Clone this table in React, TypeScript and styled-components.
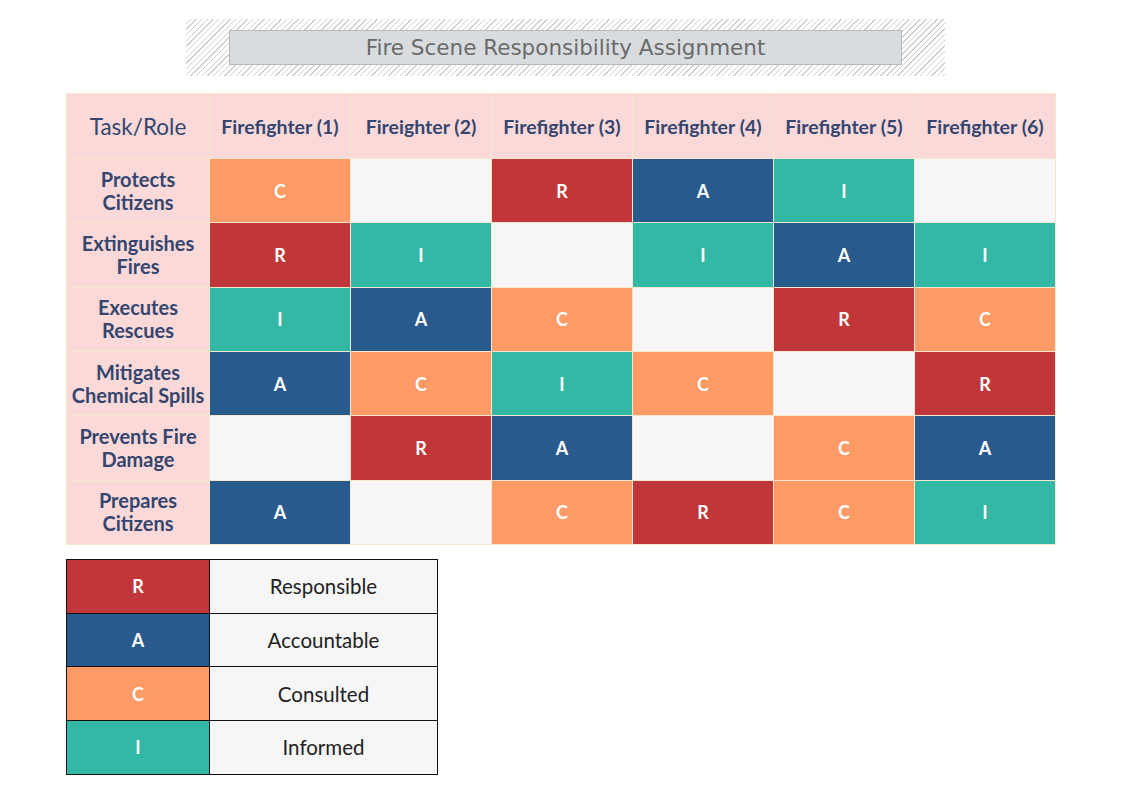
import React from 'react';
import styled, { createGlobalStyle } from 'styled-components';

type Code = 'R' | 'A' | 'C' | 'I' | '';

const COLORS: Record<string, string> = {
  R: '#c13739',
  A: '#285a8d',
  C: '#fe9a66',
  I: '#34b8a6',
  '': '#f6f6f6',
};

const GlobalStyle = createGlobalStyle`
  body {
    margin: 0;
    background: #ffffff;
    font-family: Lato, "Open Sans", sans-serif;
  }
`;

const Page = styled.div`
  display: flex;
  flex-direction: column;
  align-items: flex-start;
  padding: 19px 0 0 66px;
`;

const TitleFrame = styled.div`
  margin-left: 120px;
  width: 759px;
  height: 57px;
  box-sizing: border-box;
  padding: 11px 43px;
  background: repeating-linear-gradient(
    135deg,
    #ffffff 0px,
    #ffffff 3px,
    #cfcfcf 3px,
    #cfcfcf 4px
  );
`;

const TitleBox = styled.div`
  height: 35px;
  box-sizing: border-box;
  border: 1px solid #b5b9bd;
  background: #d9dcdf;
  display: flex;
  align-items: center;
  justify-content: center;
  font-family: "DejaVu Sans", Verdana, sans-serif;
  font-size: 21.5px;
  color: #6a6a6a;
`;

const Grid = styled.div`
  margin-top: 17px;
  display: grid;
  grid-template-columns: 142px repeat(6, 140px);
  grid-template-rows: 64px repeat(6, 63.33px);
  gap: 1px;
  padding: 1px;
  background: #f6e7cf;
`;

const Cell = styled.div<{ $bg: string }>`
  background: ${(p) => p.$bg};
  display: flex;
  align-items: center;
  justify-content: center;
  text-align: center;
`;

const HeadCell = styled(Cell)<{ $size: number; $light?: boolean }>`
  color: #34466f;
  font-size: ${(p) => p.$size}px;
  font-weight: ${(p) => (p.$light ? 400 : 700)};
  line-height: 23px;
  white-space: nowrap;
`;

const Mark = styled(Cell)`
  color: #ffffff;
  font-size: 18px;
  font-weight: 700;
`;

const Legend = styled.div`
  margin-top: 14px;
  display: grid;
  grid-template-columns: 142px 227px;
  grid-template-rows: repeat(4, 52.7px);
  gap: 1px;
  padding: 1px;
  background: #111111;
`;

const LegendText = styled(Cell)`
  color: #222222;
  font-size: 20.5px;
`;

const roles = [
  'Firefighter (1)',
  'Fireighter (2)',
  'Firefighter (3)',
  'Firefighter (4)',
  'Firefighter (5)',
  'Firefighter (6)',
];

const tasks: { name: React.ReactNode; codes: Code[] }[] = [
  { name: <>Protects<br />Citizens</>, codes: ['C', '', 'R', 'A', 'I', ''] },
  { name: <>Extinguishes<br />Fires</>, codes: ['R', 'I', '', 'I', 'A', 'I'] },
  { name: <>Executes<br />Rescues</>, codes: ['I', 'A', 'C', '', 'R', 'C'] },
  { name: <>Mitigates<br />Chemical Spills</>, codes: ['A', 'C', 'I', 'C', '', 'R'] },
  { name: <>Prevents Fire<br />Damage</>, codes: ['', 'R', 'A', '', 'C', 'A'] },
  { name: <>Prepares<br />Citizens</>, codes: ['A', '', 'C', 'R', 'C', 'I'] },
];

const legend: { code: Code; label: string }[] = [
  { code: 'R', label: 'Responsible' },
  { code: 'A', label: 'Accountable' },
  { code: 'C', label: 'Consulted' },
  { code: 'I', label: 'Informed' },
];

export default function App() {
  const pink = '#fad9d8';
  return (
    <>
      <GlobalStyle />
      <Page>
        <TitleFrame>
          <TitleBox>Fire Scene Responsibility Assignment</TitleBox>
        </TitleFrame>

        <Grid>
          <HeadCell $bg={pink} $size={22.5} $light>Task/Role</HeadCell>
          {roles.map((r) => (
            <HeadCell key={r} $bg={pink} $size={19.5}>{r}</HeadCell>
          ))}
          {tasks.map((t, i) => (
            <React.Fragment key={i}>
              <HeadCell $bg={pink} $size={20}>{t.name}</HeadCell>
              {t.codes.map((c, j) => (
                <Mark key={j} $bg={COLORS[c]}>{c}</Mark>
              ))}
            </React.Fragment>
          ))}
        </Grid>

        <Legend>
          {legend.map((l) => (
            <React.Fragment key={l.code}>
              <Mark $bg={COLORS[l.code]}>{l.code}</Mark>
              <LegendText $bg="#f6f6f6">{l.label}</LegendText>
            </React.Fragment>
          ))}
        </Legend>
      </Page>
    </>
  );
}
